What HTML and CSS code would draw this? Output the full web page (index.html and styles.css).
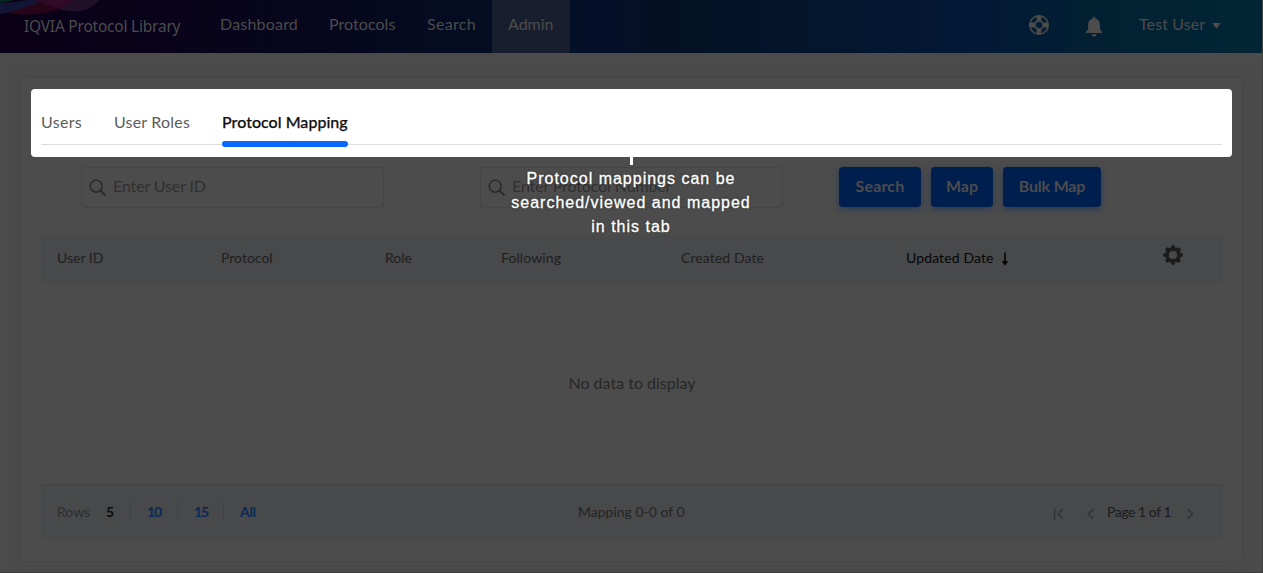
FILE: index.html
```html
<!DOCTYPE html>
<html lang="en">
<head>
<meta charset="utf-8">
<title>IQVIA Protocol Library</title>
<link rel="stylesheet" href="styles.css">
</head>
<body>
<header class="topbar">
  <svg class="swirl" width="110" height="18" viewBox="0 0 110 18">
    <path d="M34 0H99C90 14 66 14 53 6L34 0Z" fill="#20102a"/>
    <path d="M0 10C18 7 31 0 43 0H74C58 15 23 18 0 11Z" fill="#270518"/>
    <path d="M0 3C14 3 24 0 31 0H46C30 5 15 12 0 14Z" fill="#111536"/>
    <path d="M0 0H13Q6 3 0 3Z" fill="#062621"/>
    <path d="M34 0H74Q65 7 57 8Z" fill="#300a26"/>
  </svg>
  <div class="brand">IQVIA Protocol Library</div>
  <nav class="nav">
    <a class="w-dash">Dashboard</a><a class="w-prot">Protocols</a><a class="w-search">Search</a><a class="w-admin active">Admin</a>
  </nav>
  <div class="tools">
    <svg class="help" width="22" height="22" viewBox="0 0 22 22">
      <circle cx="11" cy="11" r="9.3" fill="none" stroke="#4c4c4c" stroke-width="1.5"/>
      <path d="M8.600 1.800h4.800v5h-4.800zM8.600 15.200h4.800v5h-4.800zM1.800 8.600h5v4.800h-5zM15.200 8.600h5v4.800h-5z" fill="#4c4c4c"/>
      <circle cx="11" cy="11" r="4.200" fill="none" stroke="#4c4c4c" stroke-width="1.700"/>
    </svg>
    <svg class="bell" width="18" height="22" viewBox="0 0 18 22">
      <path d="M9 .7c.9 0 1.4.6 1.4 1.4v.5c3 .8 4.5 3.200 4.500 6.100v4.500l2.300 2.800v1.100H.8V16l2.300-2.800V8.700c0-2.900 1.500-5.300 4.500-6.100v-.5C7.600 1.300 8.100.7 9 .7ZM6.600 18.300h4.800c0 1.400-1 2.400-2.400 2.400s-2.400-1-2.400-2.400Z" fill="#4c4c4c"/>
    </svg>
    <span class="user">Test User</span>
    <svg class="caret" width="9" height="6" viewBox="0 0 9 6"><path d="M.3 0h8.400L4.500 6Z" fill="#4c4c4c"/></svg>
  </div>
</header>

<main class="card">
  <section class="spotlight">
    <div class="tabs">
      <a class="tab t-users">Users</a><a class="tab t-roles">User Roles</a><a class="tab t-map current">Protocol Mapping</a>
    </div>
    <div class="callout">
      <i class="stem"></i>
      <p>Protocol mappings can be<br>searched/viewed and mapped<br>in this tab</p>
    </div>
  </section>

  <section class="filters">
    <div class="field">
      <svg width="18" height="18" viewBox="0 0 18 18"><circle cx="7.200" cy="7.200" r="5.900" fill="none" stroke="#2b2b2b" stroke-width="1.600"/><path d="M11.500 11.500l5 5" stroke="#2b2b2b" stroke-width="2"/></svg>
      <span class="ph-user">Enter User ID</span>
    </div>
    <div class="field second">
      <svg width="18" height="18" viewBox="0 0 18 18"><circle cx="7.200" cy="7.200" r="5.900" fill="none" stroke="#2b2b2b" stroke-width="1.600"/><path d="M11.500 11.500l5 5" stroke="#2b2b2b" stroke-width="2"/></svg>
      <span class="ph-num">Enter Protocol Number</span>
    </div>
    <div class="actions">
      <a class="btn b1">Search</a><a class="btn b2">Map</a><a class="btn b3">Bulk Map</a>
    </div>
  </section>

  <section class="grid">
    <div class="head">
      <span>User ID</span><span>Protocol</span><span>Role</span><span class="following">Following</span><span class="created">Created Date</span>
      <span class="sorted">Updated Date <svg width="8" height="14" viewBox="0 0 8 14"><path d="M4 .5v10" stroke="#000" stroke-width="1.500"/><path d="M.7 9.200h6.600L4 13.500Z" fill="#000"/></svg></span>
      <svg class="gear" width="20" height="20" viewBox="-10 -10 20 20">
        <g fill="#1c1c1c"><path id="tooth" d="M-2.400-6L-1.700-9.200Q0-10.600 1.700-9.200L2.400-6Z"/><use href="#tooth" transform="rotate(45)"/><use href="#tooth" transform="rotate(90)"/><use href="#tooth" transform="rotate(135)"/><use href="#tooth" transform="rotate(180)"/><use href="#tooth" transform="rotate(225)"/><use href="#tooth" transform="rotate(270)"/><use href="#tooth" transform="rotate(315)"/></g>
        <circle r="5.900" fill="none" stroke="#1c1c1c" stroke-width="3.600"/>
      </svg>
    </div>
    <div class="empty">No data to display</div>
    <div class="foot">
      <div class="rows"><span class="rl">Rows</span><b>5</b><a class="p10">10</a><a class="p15">15</a><a class="pall">All</a></div>
      <div class="total">Mapping 0-0 of 0</div>
      <div class="pager">
        <svg width="12" height="12" viewBox="0 0 12 12" fill="none" stroke="#343434" stroke-width="1.500"><path d="M1.700.5v11M10 1L5 6l5 5"/></svg>
        <svg class="prev" width="8" height="12" viewBox="0 0 8 12" fill="none" stroke="#343434" stroke-width="1.600"><path d="M6.500 1l-5 5 5 5"/></svg>
        <span>Page 1 of 1</span>
        <svg width="8" height="12" viewBox="0 0 8 12" fill="none" stroke="#343434" stroke-width="1.600"><path d="M1.500 1l5 5-5 5"/></svg>
      </div>
    </div>
  </section>
</main>
</body>
</html>
```
FILE: styles.css
```css
* { box-sizing: border-box; }
body {
  margin: 0;
  height: 573px;
  overflow: hidden;
  background: #4b4b4b;
  border-right: 1px solid #404040;
  border-bottom: 1px solid #3c3c3c;
  font: 16px/20px Lato, "Liberation Sans", sans-serif;
  white-space: nowrap;
}
.topbar {
  position: relative;
  display: flex;
  height: 53px;
  background: linear-gradient(90deg, #0a0018 0, #07061c 300px, #040d22 490px, #04102a 600px, #041123 660px, #031936 980px, #022032 1100px, #022534 100%);
  color: #4c4c4c;
}
.swirl { position: absolute; left: 0; top: 0; }
.brand {
  width: 204px;
  padding: 16px 0 0 24px;
  font-family: "Noto Sans", sans-serif;
  font-size: 15.5px;
  letter-spacing: -.22px;
}
.nav { display: flex; flex: 1; }
.nav a { padding: 14px 0 0 16px; }
.w-dash { width: 109px; letter-spacing: .2px; }
.w-prot { width: 98px; letter-spacing: .05px; }
.w-search { width: 81px; letter-spacing: .3px; }
.w-admin { width: 78px; }
.active { background: #181e2e; }
.tools { display: flex; width: 234px; }
.help { margin: 14px 0 0; }
.bell { margin: 16px 0 0 35px; }
.user { width: 66px; margin: 14px 0 0 36px; letter-spacing: .1px; }
.caret { margin: 23px 0 0 7px; }

.card {
  width: 1223px;
  height: 485px;
  margin: 24px 0 0 20px;
  padding: 11px 10px 0;
  border: 1px solid #464646;
  border-radius: 4px;
  background: #4c4c4c;
  box-shadow: 0 0 12px #484848;
}
.spotlight {
  position: relative;
  height: 68px;
  padding: 23px 10px 0;
  border-radius: 4px;
  background: #fff;
}
.tabs {
  display: flex;
  height: 33px;
  border-bottom: 1px solid #ddd;
  color: #5c5c5c;
}
.tab { height: 35px; }
.t-users { width: 73px; letter-spacing: .3px; }
.t-roles { width: 108px; letter-spacing: .2px; }
.t-map { position: relative; width: 126px; }
.current { color: #111; font-weight: 500; -webkit-text-stroke: .25px #111; letter-spacing: .03px; }
.current::after {
  content: "";
  position: absolute;
  left: 0;
  right: 0;
  top: 29px;
  height: 6px;
  border-radius: 3px;
  background: #0768fd;
}
.callout {
  position: absolute;
  z-index: 2;
  left: 450px;
  top: 68px;
  width: 300px;
  text-align: center;
  color: #fff;
  font: 16px/24px "Liberation Sans", Arial, sans-serif;
  letter-spacing: 1px;
  text-shadow: 0 0 3px #333;
  -webkit-text-stroke: .3px #fff;
}
.stem { display: block; width: 3px; height: 8px; margin: 0 auto; background: #fff; }
.callout p { margin: 2px 0 0; }

.filters { display: flex; height: 78px; padding: 10px 0 0 50px; }
.field {
  display: flex;
  align-items: center;
  width: 303px;
  height: 41px;
  padding-left: 7px;
  border: 1px solid #444;
  border-radius: 4px;
  color: #303030;
}
.field svg { margin-top: 1px; }
.field span { margin: -3px 0 0 6px; }
.ph-user { letter-spacing: -.13px; }
.ph-num { letter-spacing: -.13px; }
.second { margin-left: 96px; }
.actions { display: flex; gap: 10px; margin-left: 56px; }
.btn {
  height: 40px;
  padding-top: 9px;
  border-radius: 4px;
  background: #011f4e;
  color: #4c4c4c;
  font-weight: 700;
  text-align: center;
  box-shadow: 0 2px 6px #273956;
}
.b1 { width: 82px; letter-spacing: .15px; }
.b2 { width: 62px; }
.b3 { width: 98px; letter-spacing: -.2px; }

.grid { margin: 0 9px 0 10px; font-size: 14px; }
.head {
  display: grid;
  grid-template-columns: 164px 164px 116px 180px 225px 257px 20px;
  height: 49px;
  padding: 13px 0 0 16px;
  background: #48494b;
  color: #202020;
}
.following, .created { letter-spacing: .1px; }
.sorted { color: #060606; letter-spacing: .12px; }
.sorted svg { margin: 0 0 -3px 4px; }
.gear { margin-top: -3px; }
.empty { height: 200px; padding-top: 89px; text-align: center; font-size: 16px; color: #272727; }
.foot {
  display: flex;
  height: 56px;
  padding: 17px 0 0 16px;
  border-top: 1px solid #434446;
  background: #48494b;
  color: #252525;
}
.rows { display: flex; width: 521px; }
.rl { width: 49px; color: #2e2e2e; }
.rows b { width: 24px; color: #090909; }
.rows a { height: 17px; margin-top: 1px; padding-left: 16px; border-left: 1px solid #404143; line-height: 18px; font-weight: 700; color: #09285a; letter-spacing: -1px; }
.p10 { width: 47px; }
.p15 { width: 46px; }
.rows .pall { letter-spacing: -.3px; }
.total { width: 475px; }
.pager { display: flex; align-items: flex-start; }
.pager svg { margin-top: 6px; }
.pager .prev { margin: 6px 12px 0 22px; }
.pager span { width: 79px; color: #1b1b1b; letter-spacing: -.45px; }
```
